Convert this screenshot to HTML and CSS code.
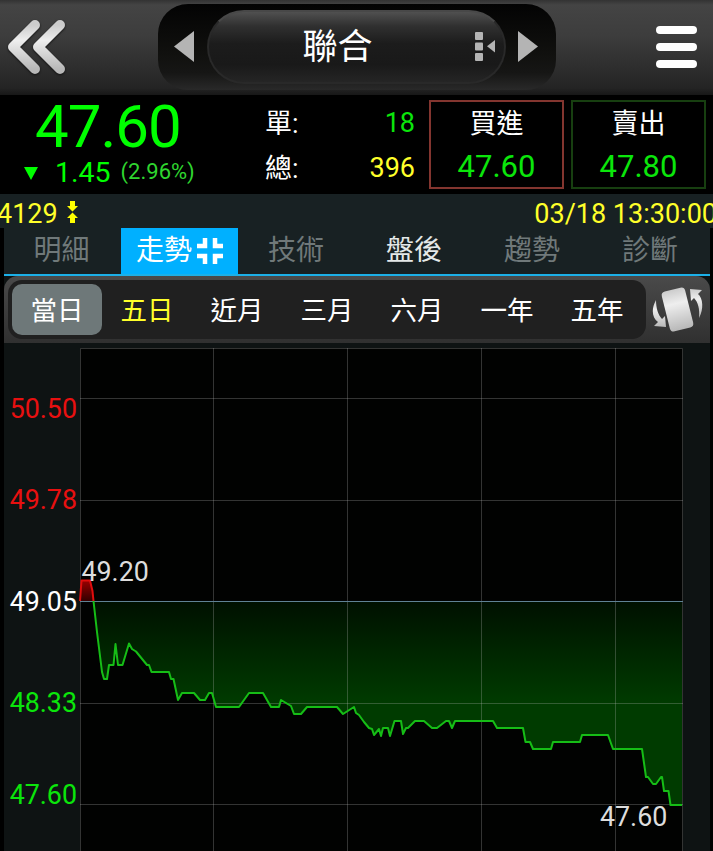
FILE: index.html
```html
<!DOCTYPE html>
<html lang="zh-Hant">
<head>
    <meta charset="UTF-8">
    <meta name="viewport" content="width=device-width, initial-scale=1.0">
    <title>聯合</title>
    <link rel="stylesheet" href="styles.css">
</head>
<body>
    <header class="top-bar">
        <svg class="back" width="60" height="58" viewBox="0 0 60 58">
            <defs>
                <linearGradient id="silver" x1="0" y1="0" x2="0" y2="1">
                    <stop offset="0" stop-color="#ccc"/>
                    <stop offset="0.35" stop-color="#eee"/>
                    <stop offset="1" stop-color="#b8b8b8"/>
                </linearGradient>
            </defs>
            <path d="M28 7L6 29L28 51M53 7L31 29L53 51" fill="none" stroke="url(#silver)" stroke-width="10" stroke-linecap="round" stroke-linejoin="round"/>
        </svg>
        <div class="switcher">
            <svg class="prev" width="20" height="32" viewBox="0 0 20 32"><path d="M20 0V31L0 15.5z" fill="#b4b4b4"/></svg>
            <div class="stock">
                <span class="stock-name">聯合</span>
                <svg class="stock-list" width="21" height="30" viewBox="0 0 21 30" fill="#b4b4b4">
                    <rect x="0" y="0" width="8" height="8" rx="1"/>
                    <rect x="0" y="10.500" width="8" height="8" rx="1"/>
                    <rect x="0" y="21" width="8" height="8" rx="1"/>
                    <path d="M20 8V20.500L12 14.200z"/>
                </svg>
            </div>
            <svg class="next" width="20" height="32" viewBox="0 0 20 32"><path d="M0 0V31L20 15.500z" fill="#b4b4b4"/></svg>
        </div>
        <div class="menu"><i></i><i></i><i></i></div>
    </header>

    <section class="quote">
        <div class="last">
            <div class="price">47.60</div>
            <div class="change">
                <svg width="14" height="13" viewBox="0 0 14 13"><path d="M0 0H14L7 13z" fill="#0f0"/></svg>
                <span class="diff">1.45</span>
                <span class="percent">(2.96%)</span>
            </div>
        </div>
        <div class="volume">
            <div class="volume-row"><span>單:</span><span class="green">18</span></div>
            <div class="volume-row"><span>總:</span><span class="yellow">396</span></div>
        </div>
        <div class="order buy"><span>買進</span><b>47.60</b></div>
        <div class="order sell"><span>賣出</span><b>47.80</b></div>
    </section>

    <section class="info">
        <span class="code">4129</span>
        <svg class="arrows" width="12" height="24" viewBox="0 0 12 24" fill="#ff0">
            <path d="M3 0H8V5H11L5.500 10.500L0 5H3zM3 22H8V17H11L5.500 11.500L0 17H3z"/>
        </svg>
        <span class="time">03/18 13:30:00</span>
    </section>

    <main class="panel">
        <nav class="tabs">
            <div class="tab">明細</div>
            <div class="tab active">走勢
                <svg width="26" height="26" viewBox="0 0 26 26" fill="none" stroke="#fff" stroke-width="4.500">
                    <path d="M8 0V8H0M18 0V8H26M8 26V18H0M18 26V18H26"/>
                </svg>
            </div>
            <div class="tab">技術</div>
            <div class="tab bright">盤後</div>
            <div class="tab">趨勢</div>
            <div class="tab">診斷</div>
        </nav>

        <div class="range-bar">
            <div class="ranges">
                <div class="range selected">當日</div>
                <div class="range yellow">五日</div>
                <div class="range">近月</div>
                <div class="range">三月</div>
                <div class="range">六月</div>
                <div class="range">一年</div>
                <div class="range">五年</div>
            </div>
            <svg class="rotate" width="52" height="48" viewBox="0 0 52 48" fill="url(#silver)">
                <rect x="13.500" y="4" width="24" height="41" rx="4" transform="rotate(-14 25.500 24.500)"/>
                <path d="M4 15C-1 24 0 33 6 37L2 41L14 42L13 31L10 34C6 30 4 23 4 15z"/>
                <path d="M47 33C52 24 51 13 46 9L50 5L38 4L39 16L42 13C46 17 48 24 47 33z"/>
            </svg>
        </div>

        <svg class="chart" width="706" height="508" viewBox="4 343 706 508">
            <defs>
                <linearGradient id="fall" gradientUnits="userSpaceOnUse" x1="0" y1="601" x2="0" y2="703">
                    <stop offset="0" stop-color="#001000"/>
                    <stop offset="0.5" stop-color="#002600"/>
                    <stop offset="1" stop-color="#003b00"/>
                </linearGradient>
                <linearGradient id="rise" x1="0" y1="0" x2="0" y2="1">
                    <stop offset="0" stop-color="#900"/>
                    <stop offset="1" stop-color="#300"/>
                </linearGradient>
            </defs>

            <rect x="80" y="348" width="603" height="503" fill="#010201"/>

            <path d="M93.500 601L97 632L102 672L104 679H107L109 665H113.500L115.500 644L118 665H122.500L129 643.500L132 649L136 651.500L147 665H149L151.500 672H169L171 679H173.500L178 700L182 693H194L200 700H205L209 693H212L216 707H239L249 693H263L271 707H279L281 700L291 706L294 714H301L307 707H337L343 714L354 707L356 713L359 715L364 722L369 728L372 729L374 735L379 729L381 736L383 728H388L390 736L394.500 721H401L403 734L406 728H408L415 721H424L432 728H437L446 721H449L452 728L455 721H493L497 728H523L525.500 742H530L533 749H551L553 742H580L582 735H608L613 749H642L646 777H648L653 784H656L661 777H662L664 791H668.500L670.500 805H682V601z" fill="url(#fall)"/>
            <path d="M80 601L81.500 580.500H90L92.500 591L93.500 601z" fill="url(#rise)"/>

            <!-- grid -->
            <path class="grid" d="M80.500 851V348.500H682.500V851M213.500 348V851M347.500 348V851M481.500 348V851M615.500 348V851M80 398.500H683M80 500.500H683M80 703.500H683M80 804.500H683"/>
            <path class="base" d="M80 601.500H683"/>

            <path class="line up" d="M80 601L81.500 580.500H90L92.500 591L93.500 601"/>
            <path class="line down" d="M93.500 601L97 632L102 672L104 679H107L109 665H113.500L115.500 644L118 665H122.500L129 643.500L132 649L136 651.500L147 665H149L151.500 672H169L171 679H173.500L178 700L182 693H194L200 700H205L209 693H212L216 707H239L249 693H263L271 707H279L281 700L291 706L294 714H301L307 707H337L343 714L354 707L356 713L359 715L364 722L369 728L372 729L374 735L379 729L381 736L383 728H388L390 736L394.500 721H401L403 734L406 728H408L415 721H424L432 728H437L446 721H449L452 728L455 721H493L497 728H523L525.500 742H530L533 749H551L553 742H580L582 735H608L613 749H642L646 777H648L653 784H656L661 777H662L664 791H668.500L670.500 805H682"/>

            <!-- labels -->
            <g class="axis" text-anchor="end">
                <text x="77" y="418" fill="#e81010">50.50</text>
                <text x="77" y="509" fill="#e81010">49.78</text>
                <text x="77" y="611" fill="#fff">49.05</text>
                <text x="77" y="712" fill="#0be60b">48.33</text>
                <text x="77" y="804" fill="#0be60b">47.60</text>
            </g>
            <text x="81.500" y="581" fill="#ddd">49.20</text>
            <text x="600" y="826" fill="#ddd">47.60</text>
        </svg>
    </main>
</body>
</html>
```
FILE: styles.css
```css
:root {
    --green: #0be60b;
    --yellow: #ffff2a;
    --blue: #00b0ff;
    --panel: #182123;
}

* {
    box-sizing: border-box;
}

body {
    margin: 0;
    width: 713px;
    height: 851px;
    overflow: hidden;
    background: #000;
    color: #fff;
    font-family: Roboto, "Noto Sans CJK TC", sans-serif;
    font-size: 27px;
}

svg {
    display: block;
    flex: none;
}

.green { color: var(--green); }
.yellow { color: var(--yellow); }

/* Top bar */
.top-bar {
    display: flex;
    justify-content: space-between;
    align-items: flex-start;
    height: 95px;
    padding: 4px 16px 0 7px;
    background: linear-gradient(#333 0, #444 5px, #3d3d3d 35px, #242424 88px, #171717 95px);
}

.back {
    margin-top: 14px;
    filter: drop-shadow(0 1px 1px #111);
}

.switcher {
    display: flex;
    align-items: center;
    justify-content: space-between;
    width: 398px;
    height: 86px;
    margin-left: 91px;
    margin-right: auto;
    padding: 0 18px 0 16px;
    border-radius: 30px;
    background: linear-gradient(#030303, #11110f 60%, #161615 80%, #292929);
}

.stock {
    display: flex;
    align-items: center;
    justify-content: flex-end;
    width: 299px;
    height: 74px;
    padding-right: 8px;
    border: 2px solid #292929;
    border-top-color: #484848;
    border-radius: 37px;
    background: linear-gradient(#505050, #303030 20%, #1c1c1c 45%, #191919 75%, #252525);
}

.stock-name {
    width: 100px;
    margin-right: 87px;
    padding-top: 2px;
    text-align: center;
    font-size: 35px;
    line-height: 70px;
    white-space: nowrap;
}

.menu {
    display: flex;
    flex-direction: column;
    gap: 9px;
    margin-top: 22px;
}

.menu i {
    width: 41px;
    height: 8px;
    border-radius: 4px;
    background: #fff;
}

/* Quote */
.quote {
    display: flex;
    height: 99px;
    padding: 5px 7px 0 0;
}

.last {
    width: 266px;
    color: #0f0;
}

.price {
    height: 56px;
    padding-left: 35px;
    font-size: 60px;
    letter-spacing: -1px;
    line-height: 54px;
}

.change {
    display: flex;
    align-items: center;
    height: 34px;
    padding-left: 24px;
    line-height: 24px;
}

.diff {
    margin-left: 17px;
    font-size: 28.5px;
}

.percent {
    margin-left: 10px;
    margin-bottom: 3px;
    color: #2fd52f;
    font-size: 22px;
}

.volume {
    width: 149px;
    padding-top: 1px;
}

.volume-row {
    display: flex;
    justify-content: space-between;
    height: 45px;
    line-height: 45px;
}

.volume-row span:first-child {
    margin-left: -1px;
    padding-top: 1px;
}

.order {
    display: flex;
    flex-direction: column;
    align-items: center;
    width: 135px;
    height: 89px;
    border: 2px solid #83352f;
}

.buy {
    margin-left: 14px;
}

.order span {
    height: 43px;
    line-height: 44px;
}

.order b {
    color: var(--green);
    font-size: 31px;
    font-weight: 400;
    line-height: 44px;
}

.sell {
    margin-left: 7px;
    border-color: #173f10;
}

/* Code and time */
.info {
    display: flex;
    height: 34px;
    background: var(--panel);
    color: var(--yellow);
    line-height: 40px;
    white-space: nowrap;
}

.code {
    margin-left: -3px;
}

.arrows {
    margin: 7px 0 0 9px;
}

.time {
    margin-left: auto;
    margin-right: -4px;
}

/* Tabs */
.panel {
    width: 706px;
    margin-left: 4px;
    background: #0e1313;
}

.tabs {
    display: flex;
    height: 48px;
    border-bottom: 2px solid #1cb0e8;
    background: var(--panel);
}

.tab {
    display: flex;
    flex: 1;
    align-items: center;
    justify-content: center;
    gap: 5px;
    padding: 0 2px 1px 0;
    color: #70797a;
    font-size: 28px;
    line-height: 40px;
}

.tab.active {
    flex: 0 0 117px;
    padding-right: 0;
    background: var(--blue);
    color: #fff;
}

.tab:first-child {
    flex: 0 0 117px;
}

.tab.bright {
    color: #e4e8e8;
}

/* Ranges */
.range-bar {
    display: flex;
    height: 67px;
    padding: 4px 6px 4px 4px;
    border-radius: 14px 14px 0 0;
    background: linear-gradient(#4a4a4a, #303030);
}

.ranges {
    display: flex;
    width: 638px;
    height: 59px;
    padding: 4px;
    border-radius: 14px;
    background: #202020;
}

.range {
    width: 90px;
    height: 51px;
    border-radius: 10px;
    text-align: center;
    font-size: 26.5px;
    line-height: 54px;
}

.range.selected {
    background: #6e7879;
}

.rotate {
    margin: 5px 0 0 6px;
}

/* Chart */
.chart {
    font-size: 26.8px;
}

.grid {
    fill: none;
    stroke: #bbb;
    stroke-opacity: 0.27;
}

.base {
    stroke: #5f8294;
}

.line {
    fill: none;
    stroke-width: 2;
    stroke-linejoin: round;
}

.up { stroke: #e00d0d; }
.down { stroke: #16bd16; }
```
